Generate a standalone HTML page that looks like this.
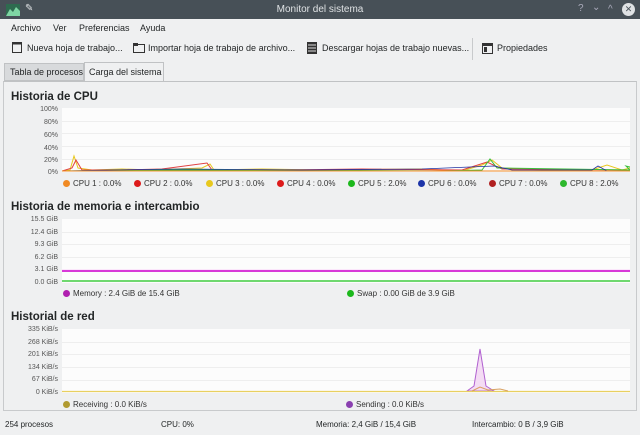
<!DOCTYPE html><html><head><style>
*{margin:0;padding:0;box-sizing:border-box}
body{width:640px;height:435px;background:#eff0f1;font-family:"Liberation Sans",sans-serif;color:#232627;position:relative;overflow:hidden;font-size:9px}
.a{position:absolute;white-space:nowrap}
.tb{left:0;top:0;width:640px;height:19px;background:#475057;color:#dfe2e4;font-size:10px;text-align:center;line-height:19px}
h3{position:absolute;font-size:11.5px;font-weight:bold;color:#232627}
.plot{position:absolute;left:62px;width:568px;height:64px;background:#fcfcfc}
.yl{position:absolute;font-size:7px;color:#555;text-align:right;width:56px;left:2px}
.lg{position:absolute;font-size:8px;color:#333}
.d{display:inline-block;width:7px;height:7px;border-radius:50%;margin-right:3px;vertical-align:-1px}
.g{position:absolute;left:0;width:568px;height:1px;background:#eeeeee}
</style></head><body>
<div class="a tb">Monitor del sistema</div>
<svg class="a" style="left:6px;top:4px" width="14" height="12"><rect width="14" height="12" fill="#2e6b4f"/><path d="M0 12 L4 5 L7 8 L10 3 L14 7 V12Z" fill="#7fd6a4"/></svg>
<div class="a" style="left:25px;top:3px;color:#dfe2e4;font-size:10px">✎</div>
<div class="a" style="left:578px;top:3px;color:#aab;font-size:10px">?</div>
<div class="a" style="left:592px;top:2px;color:#aab;font-size:10px">⌄</div>
<div class="a" style="left:608px;top:4px;color:#aab;font-size:10px">^</div>
<div class="a" style="left:622px;top:3px;width:13px;height:13px;border-radius:50%;background:#dfe2e4;color:#475057;font-size:9px;text-align:center;line-height:13px">✕</div>
<div class="a" style="left:11px;top:23px">Archivo</div>
<div class="a" style="left:53px;top:23px">Ver</div>
<div class="a" style="left:79px;top:23px">Preferencias</div>
<div class="a" style="left:140px;top:23px">Ayuda</div>
<svg class="a" style="left:12px;top:42px" width="11" height="12"><rect x="0.5" y="0.5" width="9" height="10" fill="none" stroke="#333"/><rect x="0.5" y="0.5" width="9" height="2" fill="#333"/></svg>
<div class="a" style="left:27px;top:43px">Nueva hoja de trabajo...</div>
<svg class="a" style="left:133px;top:43px" width="12" height="10"><rect x="0.5" y="1.5" width="11" height="8" fill="none" stroke="#333"/><rect x="0" y="0" width="5" height="3" fill="#333"/></svg>
<div class="a" style="left:148px;top:43px">Importar hoja de trabajo de archivo...</div>
<svg class="a" style="left:307px;top:42px" width="10" height="12"><rect width="10" height="12" fill="#333"/><path d="M1 3H9M1 6H9M1 9H9" stroke="#ddd"/></svg>
<div class="a" style="left:322px;top:43px">Descargar hojas de trabajo nuevas...</div>
<div class="a" style="left:472px;top:38px;width:1px;height:22px;background:#c8cacc"></div>
<svg class="a" style="left:482px;top:43px" width="11" height="11"><rect x="0.5" y="0.5" width="10" height="10" fill="none" stroke="#333"/><rect x="0" y="0" width="11" height="3" fill="#333"/><rect x="2" y="4" width="3" height="5" fill="#333"/></svg>
<div class="a" style="left:497px;top:43px">Propiedades</div>
<div class="a" style="left:4px;top:63px;width:80px;height:18px;background:#d8dadc;border:1px solid #c0c2c4;padding:3px 0 0 5px">Tabla de procesos</div>
<div class="a" style="left:84px;top:62px;width:80px;height:20px;background:#eff0f1;border:1px solid #c0c2c4;border-bottom:none;padding:4px 0 0 4px">Carga del sistema</div>
<div class="a" style="left:3px;top:81px;width:634px;height:330px;border:1px solid #c8cacc;border-top-color:#c0c2c4"></div>
<div class="a" style="left:164px;top:81px;width:472px;height:1px;background:#c0c2c4"></div>

<h3 style="left:11px;top:91px">Historia de CPU</h3>
<div class="plot" style="top:108px"><div class="g" style="top:13px"></div><div class="g" style="top:25px"></div><div class="g" style="top:38px"></div><div class="g" style="top:51px"></div>
<svg class="a" style="left:0;top:0" width="568" height="64"><path d="M0 63 L8 62 L12 48 L16 60 L30 62 L60 61 L90 62 L140 60 L148 56 L152 62 L200 61 L260 62 L360 61 L400 63 L420 57 L430 52 L440 60 L480 62 L530 62 L545 57 L560 62 L568 60" fill="none" stroke="#e8c81e" stroke-width="1"/><path d="M0 63 L10 60 L14 52 L20 62 L60 62 L100 61 L145 55 L150 62 L220 62 L300 61 L400 62 L425 54 L440 61 L568 62" fill="none" stroke="#e04040" stroke-width="1"/><path d="M0 63 L100 62 L200 62 L380 63 L420 62 L428 51 L435 60 L568 62 L564 58 L568 59" fill="none" stroke="#3cbf3c" stroke-width="1"/><path d="M0 63 L50 62 L120 61 L240 62 L360 61 L432 58 L450 62 L530 62 L536 58 L545 63 L568 63" fill="none" stroke="#2030a0" stroke-width="0.8"/><path d="M0 63 L568 63" stroke="#f08a24"/></svg></div>
<div class="yl" style="top:106px">100%</div><div class="yl" style="top:119px">80%</div><div class="yl" style="top:132px">60%</div><div class="yl" style="top:145px">40%</div><div class="yl" style="top:157px">20%</div><div class="yl" style="top:169px">0%</div>
<div class="lg" style="left:63px;top:179px"><span class="d" style="background:#f08a24"></span>CPU 1 : 0.0%</div>
<div class="lg" style="left:134px;top:179px"><span class="d" style="background:#dd1b1b"></span>CPU 2 : 0.0%</div>
<div class="lg" style="left:206px;top:179px"><span class="d" style="background:#e8c81e"></span>CPU 3 : 0.0%</div>
<div class="lg" style="left:277px;top:179px"><span class="d" style="background:#dd1b1b"></span>CPU 4 : 0.0%</div>
<div class="lg" style="left:348px;top:179px"><span class="d" style="background:#1cb81c"></span>CPU 5 : 2.0%</div>
<div class="lg" style="left:418px;top:179px"><span class="d" style="background:#1c34a8"></span>CPU 6 : 0.0%</div>
<div class="lg" style="left:489px;top:179px"><span class="d" style="background:#b02020"></span>CPU 7 : 0.0%</div>
<div class="lg" style="left:560px;top:179px"><span class="d" style="background:#2eb82e"></span>CPU 8 : 2.0%</div>

<h3 style="left:11px;top:201px">Historia de memoria e intercambio</h3>
<div class="plot" style="top:219px"><div class="g" style="top:13px"></div><div class="g" style="top:25px"></div><div class="g" style="top:38px"></div><div class="g" style="top:50px;background:#fbe6fb"></div>
<div class="g" style="top:51px;height:2px;background:#d838d8"></div><div class="g" style="top:61px;height:2px;background:#6fd86f"></div></div>
<div class="yl" style="top:216px">15.5 GiB</div><div class="yl" style="top:229px">12.4 GiB</div><div class="yl" style="top:241px">9.3 GiB</div><div class="yl" style="top:254px">6.2 GiB</div><div class="yl" style="top:266px">3.1 GiB</div><div class="yl" style="top:279px">0.0 GiB</div>
<div class="lg" style="left:63px;top:289px"><span class="d" style="background:#b020b0"></span>Memory : 2.4 GiB de 15.4 GiB</div>
<div class="lg" style="left:347px;top:289px"><span class="d" style="background:#1cb81c"></span>Swap : 0.00 GiB de 3.9 GiB</div>

<h3 style="left:11px;top:311px">Historial de red</h3>
<div class="plot" style="top:329px"><div class="g" style="top:13px"></div><div class="g" style="top:25px"></div><div class="g" style="top:38px"></div><div class="g" style="top:51px"></div>
<svg class="a" style="left:0;top:0" width="568" height="64"><path d="M405 62 L412 57 L418 20 L424 57 L432 62Z" fill="#f4dcf4" stroke="#b060d0" stroke-width="1"/><path d="M0 62.5 H568" stroke="#e8d060" stroke-width="1.2"/><path d="M410 62 L418 58 L426 61 L438 60 L446 62" fill="none" stroke="#d9a060"/></svg></div>
<div class="yl" style="top:326px">335 KiB/s</div><div class="yl" style="top:339px">268 KiB/s</div><div class="yl" style="top:351px">201 KiB/s</div><div class="yl" style="top:364px">134 KiB/s</div><div class="yl" style="top:376px">67 KiB/s</div><div class="yl" style="top:389px">0 KiB/s</div>
<div class="lg" style="left:63px;top:400px"><span class="d" style="background:#b09a30"></span>Receiving : 0.0 KiB/s</div>
<div class="lg" style="left:346px;top:400px"><span class="d" style="background:#8a40b0"></span>Sending : 0.0 KiB/s</div>

<div class="a" style="left:5px;top:420px;font-size:8px">254 procesos</div>
<div class="a" style="left:161px;top:420px;font-size:8px">CPU: 0%</div>
<div class="a" style="left:316px;top:420px;font-size:8px">Memoria: 2,4 GiB / 15,4 GiB</div>
<div class="a" style="left:472px;top:420px;font-size:8px">Intercambio: 0 B / 3,9 GiB</div>
</body></html>
